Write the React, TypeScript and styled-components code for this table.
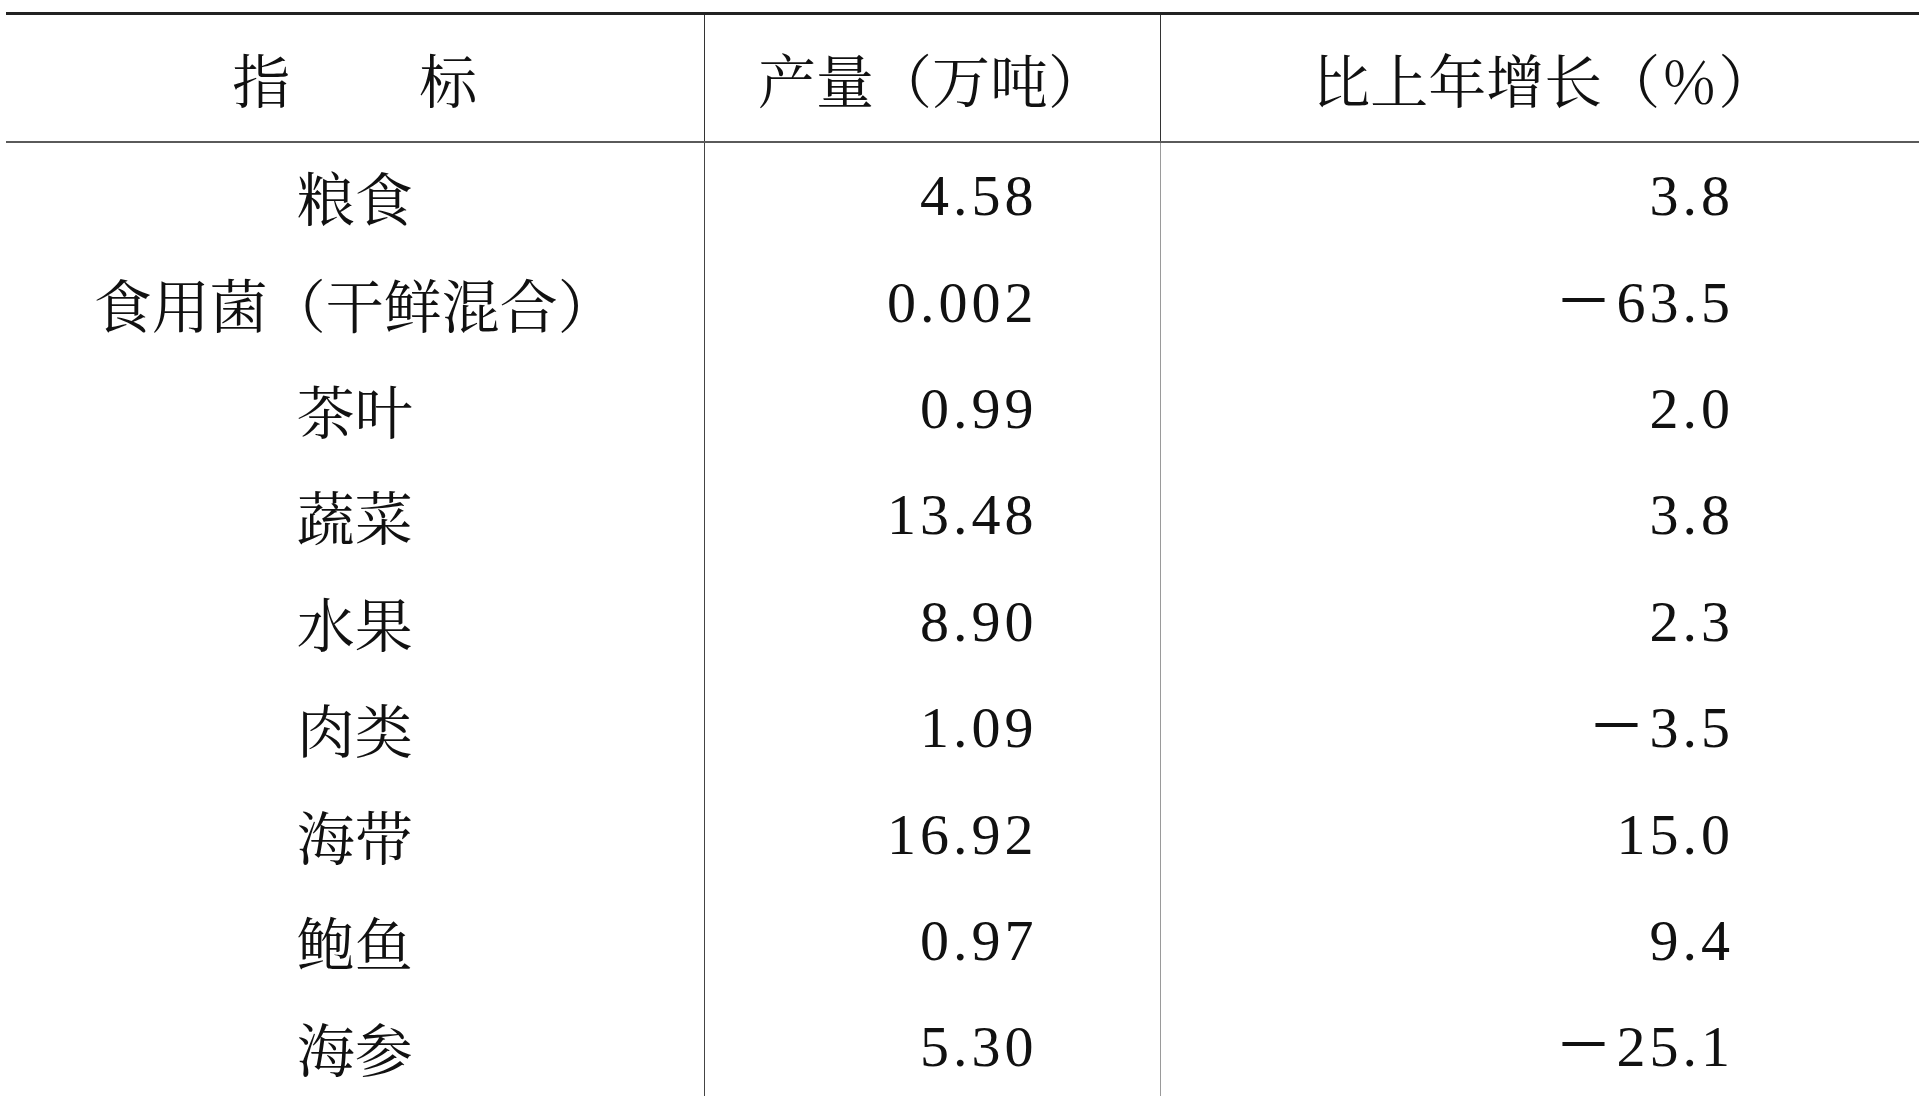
import { FC } from "react";
import styled, { createGlobalStyle } from "styled-components";

const GlobalStyle = createGlobalStyle`
  html, body {
    margin: 0;
    padding: 0;
    background: #ffffff;
    overflow: hidden;
  }
`;

interface Row {
  name: string;
  output: string;
  growth: string;
}

const rows: Row[] = [
  { name: "粮食", output: "4.58", growth: "3.8" },
  { name: "食用菌（干鲜混合）", output: "0.002", growth: "－63.5" },
  { name: "茶叶", output: "0.99", growth: "2.0" },
  { name: "蔬菜", output: "13.48", growth: "3.8" },
  { name: "水果", output: "8.90", growth: "2.3" },
  { name: "肉类", output: "1.09", growth: "－3.5" },
  { name: "海带", output: "16.92", growth: "15.0" },
  { name: "鲍鱼", output: "0.97", growth: "9.4" },
  { name: "海参", output: "5.30", growth: "－25.1" },
];

const Page = styled.div`
  padding: 12px 0 0 6px;
  width: 1922px;
  font-family: "Noto Serif CJK SC", "Liberation Serif", "Noto Sans CJK SC",
    serif;
  color: #111111;
`;

const Table = styled.table`
  width: 1922px;
  table-layout: fixed;
  border-collapse: collapse;
  border-top: 3px solid #222222;
`;

// full-width brackets keep their whole cell, as in the printed table
const Paren = styled.span<{ $close?: boolean }>`
  display: inline-block;
  width: 1em;
  text-align: ${({ $close }) => ($close ? "left" : "right")};
`;

const HeadCell = styled.th<{ $last?: boolean }>`
  height: 126px;
  padding: 0;
  font-weight: 400;
  font-size: 58px;
  line-height: 1;
  text-align: center;
  border-bottom: 2px solid #5a5a5a;
  border-right: ${({ $last }) => ($last ? "none" : "1.5px solid #333333")};
`;

const HeadSplit = styled.span`
  display: inline-flex;
  gap: 129px;
`;

const NameCell = styled.td`
  height: 106.4px;
  padding: 0;
  font-size: 58px;
  line-height: 1;
  text-align: center;
  border-right: 1.5px solid #444444;
`;

const NumCell = styled.td<{ $pad: number; $light?: boolean }>`
  height: 106.4px;
  padding: 0 ${({ $pad }) => $pad}px 0 0;
  font-family: "Liberation Serif", "Noto Sans CJK SC", serif;
  font-size: 58px;
  letter-spacing: 4px;
  line-height: 1;
  text-align: right;
  border-right: ${({ $light }) =>
    $light ? "1px solid #9a9a9a" : "none"};
`;

const withParens = (text: string) => {
  const m = text.match(/^(.*)（(.*)）$/);
  if (!m) return text;
  return (
    <>
      {m[1]}
      <Paren>（</Paren>
      {m[2]}
      <Paren $close>）</Paren>
    </>
  );
};

const App: FC = () => (
  <Page>
    <GlobalStyle />
    <Table>
      <colgroup>
        <col style={{ width: 698 }} />
        <col style={{ width: 456 }} />
        <col />
      </colgroup>
      <thead>
        <tr>
          <HeadCell>
            <HeadSplit>
              <span>指</span>
              <span>标</span>
            </HeadSplit>
          </HeadCell>
          <HeadCell>{withParens("产量（万吨）")}</HeadCell>
          <HeadCell $last>{withParens("比上年增长（％）")}</HeadCell>
        </tr>
      </thead>
      <tbody>
        {rows.map((row) => (
          <tr key={row.name}>
            <NameCell>{withParens(row.name)}</NameCell>
            <NumCell $pad={122} $light>
              {row.output}
            </NumCell>
            <NumCell $pad={194}>{row.growth}</NumCell>
          </tr>
        ))}
      </tbody>
    </Table>
  </Page>
);

export default App;
